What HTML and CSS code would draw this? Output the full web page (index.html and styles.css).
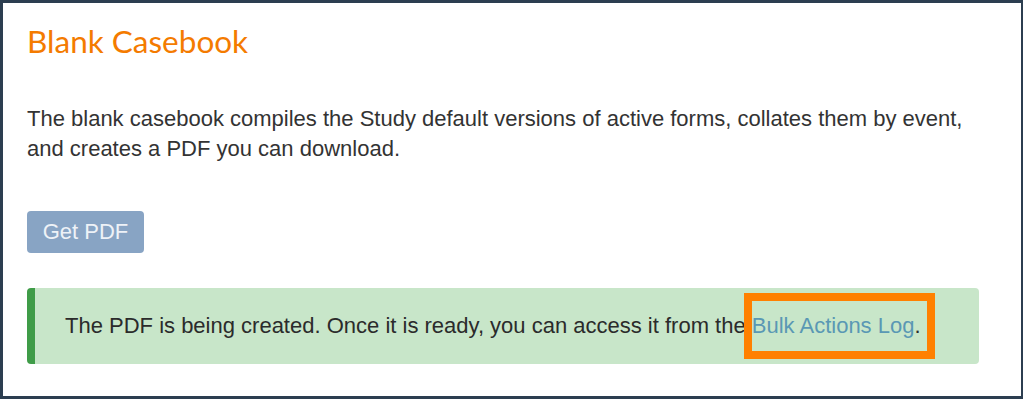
FILE: index.html
```html
<!DOCTYPE html>
<html>
<head>
<meta charset="utf-8">
<link rel="stylesheet" href="styles.css">
</head>
<body>
<div class="frame">
  <h1 class="title">Blank Casebook</h1>
  <p class="desc">The blank casebook compiles the Study default versions of active forms, collates them by event, and creates a PDF you can download.</p>
  <button class="btn">Get PDF</button>
  <div class="alert">
    <span class="msg">The PDF is being created. Once it is ready, you can access it from the <span class="hl"><a class="link" href="#">Bulk Actions Log</a></span>.</span>
  </div>
</div>
</body>
</html>
```
FILE: styles.css
```css
html, body {
  margin: 0;
  padding: 0;
  background: #ffffff;
}
.frame {
  box-sizing: border-box;
  width: 1023px;
  height: 399px;
  border: 3px solid #2c3e50;
  border-right-width: 2px;
  padding: 19px 0 0 24px;
  font-family: "Liberation Sans", Arial, sans-serif;
  color: #333333;
}
.title {
  margin: 0;
  font-family: "Lato", "Noto Sans", sans-serif;
  font-weight: 400;
  font-size: 31.5px;
  line-height: 38px;
  color: #f47b00;
}
.desc {
  margin: 44px 0 0 0;
  font-size: 22px;
  line-height: 30px;
  width: 975px;
}
.btn {
  display: block;
  margin-top: 47px;
  width: 117px;
  height: 42px;
  border: none;
  border-radius: 4px;
  background: #88a4c4;
  color: #eef2f7;
  font-family: "Liberation Sans", Arial, sans-serif;
  font-size: 22px;
  padding: 0;
}
.alert {
  box-sizing: border-box;
  margin-top: 35px;
  width: 952px;
  height: 76px;
  background: #c8e6c9;
  border-left: 8px solid #3f9c48;
  border-radius: 4px;
  display: flex;
  align-items: center;
  padding-left: 30px;
  font-size: 22px;
  color: #2b2b2b;
}
.hl {
  display: inline-block;
  position: relative;
}
.hl::after {
  content: "";
  position: absolute;
  left: -8px;
  right: -21px;
  top: -20px;
  bottom: -20px;
  border: 8px solid #ff8000;
}
.link {
  color: #5a98b4;
  text-decoration: none;
}
```
